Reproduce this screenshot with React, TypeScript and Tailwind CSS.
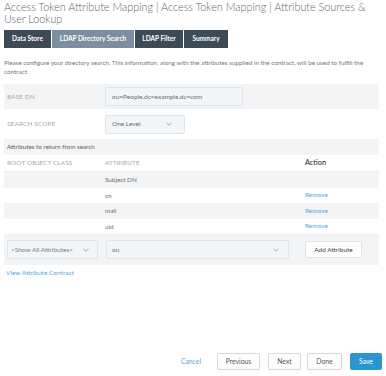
import React from "react";

const Chevron = () => (
  <svg width="6" height="4" viewBox="0 0 6 4" className="shrink-0">
    <path d="M0.5 0.8 L3 3.2 L5.5 0.8" fill="none" stroke="#8a9299" strokeWidth="0.8" />
  </svg>
);

export default function App() {
  return (
    <div
      className="w-[386px] h-[376px] bg-white relative overflow-hidden text-[#555]"
      style={{ fontFamily: "Lato, 'Open Sans', sans-serif" }}
    >
      <div className="pl-[4px] pr-[7px] pt-[1px]">
        <div className="text-[10.8px] leading-[12px] font-light text-[#60666b]">
          Access Token Attribute Mapping | Access Token Mapping | Attribute Sources &amp; User Lookup
        </div>

        <div className="flex gap-[1px] mt-[5px] h-[18px]">
          <div className="w-[47px] bg-[#3d4b57] text-white text-[6.5px] font-bold flex items-center justify-center">
            Data Store
          </div>
          <div className="w-[82px] bg-[#7c8e9f] text-white text-[6.5px] font-bold flex items-center justify-center">
            LDAP Directory Search
          </div>
          <div className="w-[48px] bg-[#3d4b57] text-white text-[6.5px] font-bold flex items-center justify-center">
            LDAP Filter
          </div>
          <div className="w-[44px] bg-[#3d4b57] text-white text-[6.5px] font-bold flex items-center justify-center">
            Summary
          </div>
        </div>

        <div className="mt-[10px] text-[6.3px] leading-[9px] text-[#74787c]">
          Please configure your directory search. This information, along with the attributes supplied in the contract, will be used to fulfill the contract.
        </div>

        <div className="mt-[8px] w-[375px]">
          {/* Base DN */}
          <div className="flex items-center h-[25px] bg-[#f3f4f5]">
            <div className="w-[101px] pl-[3px] text-[6.3px] text-[#a4a8ac] tracking-[0.2px]">BASE DN</div>
            <div className="w-[138px] h-[19px] bg-[#f2f6f8] border border-[#dfe5ea] rounded-[2px] flex items-center pl-[6px] text-[6.5px] text-[#6a6e72]">
              ou=People,dc=example,dc=com
            </div>
          </div>
          {/* Search scope */}
          <div className="flex items-center h-[30px]">
            <div className="w-[101px] pl-[3px] text-[6.3px] text-[#a4a8ac] tracking-[0.2px]">SEARCH SCOPE</div>
            <div className="w-[80px] h-[19px] bg-[#f2f6f8] border border-[#dfe5ea] rounded-[2px] flex items-center justify-between pl-[6px] pr-[12px] text-[6.5px] text-[#6a6e72]">
              <span>One Level</span>
              <Chevron />
            </div>
          </div>
          {/* Attributes header */}
          <div className="flex items-center h-[16px] bg-[#f3f4f5] pl-[3px] text-[6.3px] text-[#5a5e62]">
            Attributes to return from search
          </div>
          <div className="flex items-center h-[17px] border-b border-[#eceeef]">
            <div className="w-[101px] pl-[3px] text-[6.3px] text-[#a4a8ac] tracking-[0.2px]">ROOT OBJECT CLASS</div>
            <div className="w-[200px] text-[6.3px] text-[#a4a8ac] tracking-[0.2px]">ATTRIBUTE</div>
            <div className="text-[7.3px] text-[#222]">Action</div>
          </div>
          {[
            { name: "Subject DN", remove: false, gray: true },
            { name: "cn", remove: true, gray: false },
            { name: "mail", remove: true, gray: true },
            { name: "uid", remove: true, gray: false },
          ].map((r) => (
            <div
              key={r.name}
              className={`flex items-center h-[15.5px] ${r.gray ? "bg-[#f3f4f5]" : "bg-white"}`}
            >
              <div className="w-[101px]" />
              <div className="w-[200px] text-[6.3px] text-[#6a6e72]">{r.name}</div>
              {r.remove && <div className="text-[6.5px] text-[#5aa8da]">Remove</div>}
            </div>
          ))}
          {/* add row */}
          <div className="flex items-center h-[31px] bg-[#f3f4f5] pl-[3px]">
            <div className="w-[91px] h-[19px] bg-[#f2f6f8] border border-[#dfe5ea] rounded-[2px] flex items-center justify-between pl-[3px] pr-[8px] text-[6.5px] text-[#7a7e82]">
              <span>&lt;Show All Attributes&gt;</span>
              <Chevron />
            </div>
            <div className="ml-[8px] w-[183px] h-[19px] bg-[#f2f6f8] border border-[#dfe5ea] rounded-[2px] flex items-center justify-between pl-[5px] pr-[9px] text-[6.5px] text-[#6a6e72]">
              <span>ou</span>
              <Chevron />
            </div>
            <div className="ml-[16px] w-[57px] h-[17px] bg-white border border-[#e2e5e8] rounded-[2px] flex items-center justify-center text-[6.5px] text-[#444]">
              Add Attribute
            </div>
          </div>
        </div>

        <div className="mt-[3px] pl-[2px] text-[6.5px] text-[#5aa8da]">View Attribute Contract</div>
      </div>

      <div className="absolute left-0 right-0 top-[353px] flex items-center justify-end pr-[4px] h-[17px] text-[6.8px]">
        <div className="text-[#5aa8da] mr-[16px]">Cancel</div>
        <div className="w-[43px] h-[17px] border border-[#d5d8db] rounded-[2px] flex items-center justify-center text-[#555] mr-[8px]">Previous</div>
        <div className="w-[33px] h-[17px] border border-[#d5d8db] rounded-[2px] flex items-center justify-center text-[#555] mr-[6px]">Next</div>
        <div className="w-[35px] h-[17px] border border-[#d5d8db] rounded-[2px] flex items-center justify-center text-[#555] mr-[8px]">Done</div>
        <div className="w-[32px] h-[17px] bg-[#2a95d2] rounded-[2px] flex items-center justify-center text-white">Save</div>
      </div>
    </div>
  );
}
